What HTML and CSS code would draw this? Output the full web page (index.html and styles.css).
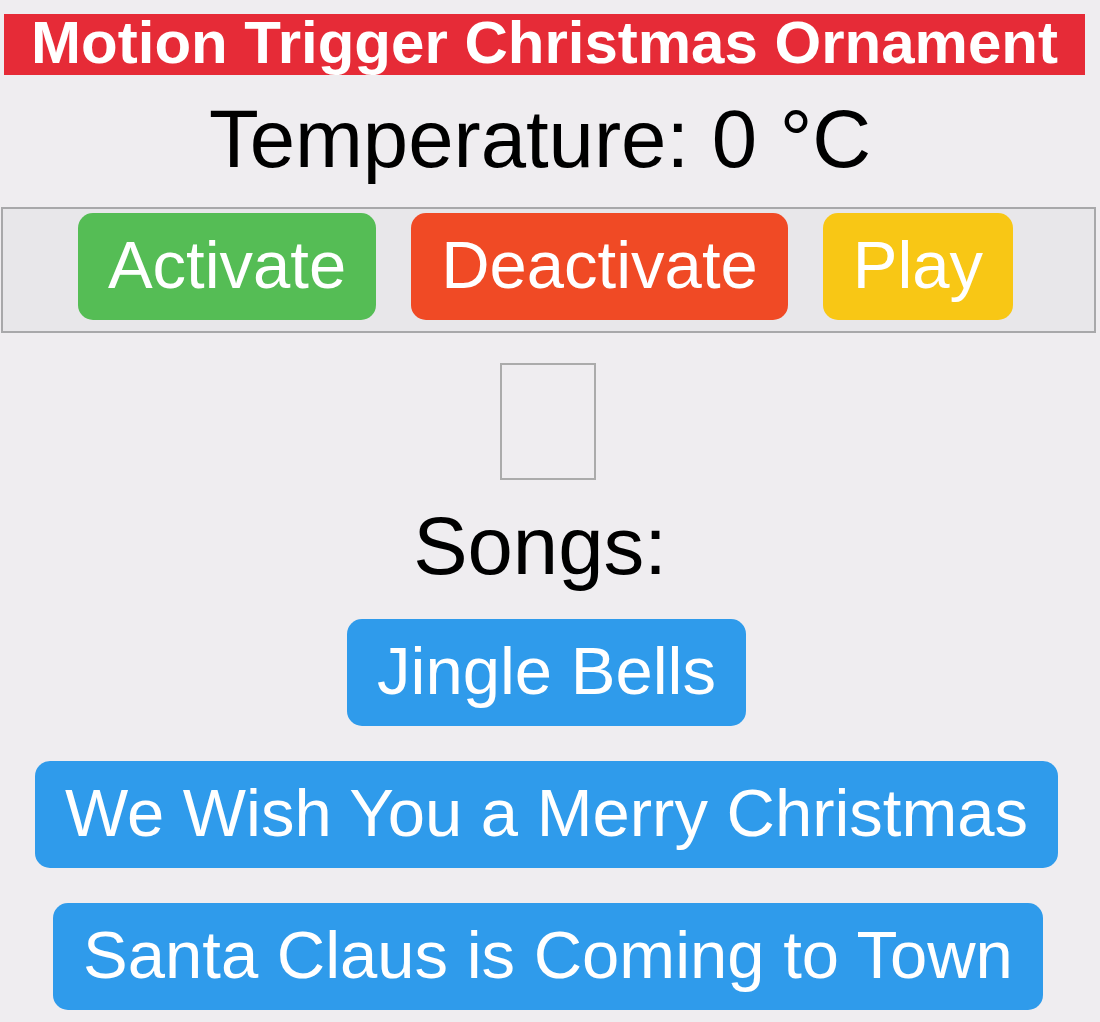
FILE: index.html
```html
<!DOCTYPE html>
<html lang="en">
<head>
<meta charset="utf-8">
<title>Motion Trigger Christmas Ornament</title>
<link rel="stylesheet" href="styles.css">
</head>
<body>
  <h1 class="title">Motion Trigger Christmas Ornament</h1>
  <p class="temp">Temperature: 0 °C</p>
  <div class="controls">
    <button class="btn btn-green">Activate</button>
    <button class="btn btn-red">Deactivate</button>
    <button class="btn btn-yellow">Play</button>
  </div>
  <div class="frame"></div>
  <p class="songs-label">Songs:</p>
  <div class="songs">
    <button class="btn btn-blue">Jingle Bells</button>
    <button class="btn btn-blue">We Wish You a Merry Christmas</button>
    <button class="btn btn-blue btn-shift">Santa Claus is Coming to Town</button>
  </div>
</body>
</html>
```

FILE: styles.css
```css
html, body {
  margin: 0;
  padding: 0;
}
body {
  background: #efedf0;
  font-family: "Liberation Sans", Arial, sans-serif;
  color: #000;
  width: 1100px;
  height: 1022px;
  overflow: hidden;
}
.title {
  margin: 14px 15px 0 4px;
  height: 57px;
  padding-bottom: 4px;
  line-height: 57px;
  background: #e62b37;
  color: #fff;
  font-size: 60px;
  font-weight: bold;
  text-align: center;
  white-space: nowrap;
}
.temp {
  margin: 18px 0 0 0;
  font-size: 81.5px;
  line-height: 92px;
  text-align: center;
  padding-right: 20px;
}
.controls {
  margin: 22px 4px 0 1px;
  border: 2px solid #a8a8aa;
  background: #e8e7ea;
  padding: 4px 6px 11px 0;
  display: flex;
  justify-content: center;
  gap: 35px;
}
.btn {
  font-family: "Liberation Sans", Arial, sans-serif;
  font-size: 67px;
  line-height: 76px;
  padding: 14px 30px 17px;
  border: none;
  border-radius: 15px;
  color: #fff;
  white-space: nowrap;
}
.btn-green { background: #55bd55; }
.btn-red { background: #f04a25; }
.btn-yellow { background: #f8c715; }
.btn-blue { background: #2f9beb; }
.frame {
  margin: 30px auto 0;
  width: 92px;
  height: 113px;
  border: 2px solid #ababab;
  position: relative;
  left: -2px;
}
.songs-label {
  margin: 20px 0 0 0;
  font-size: 81.5px;
  line-height: 92px;
  text-align: center;
  padding-right: 20px;
}
.songs {
  margin-top: 27px;
  display: flex;
  flex-direction: column;
  align-items: center;
  gap: 35px;
  padding-right: 7px;
}
.btn-shift {
  margin-left: 3px;
}
```
